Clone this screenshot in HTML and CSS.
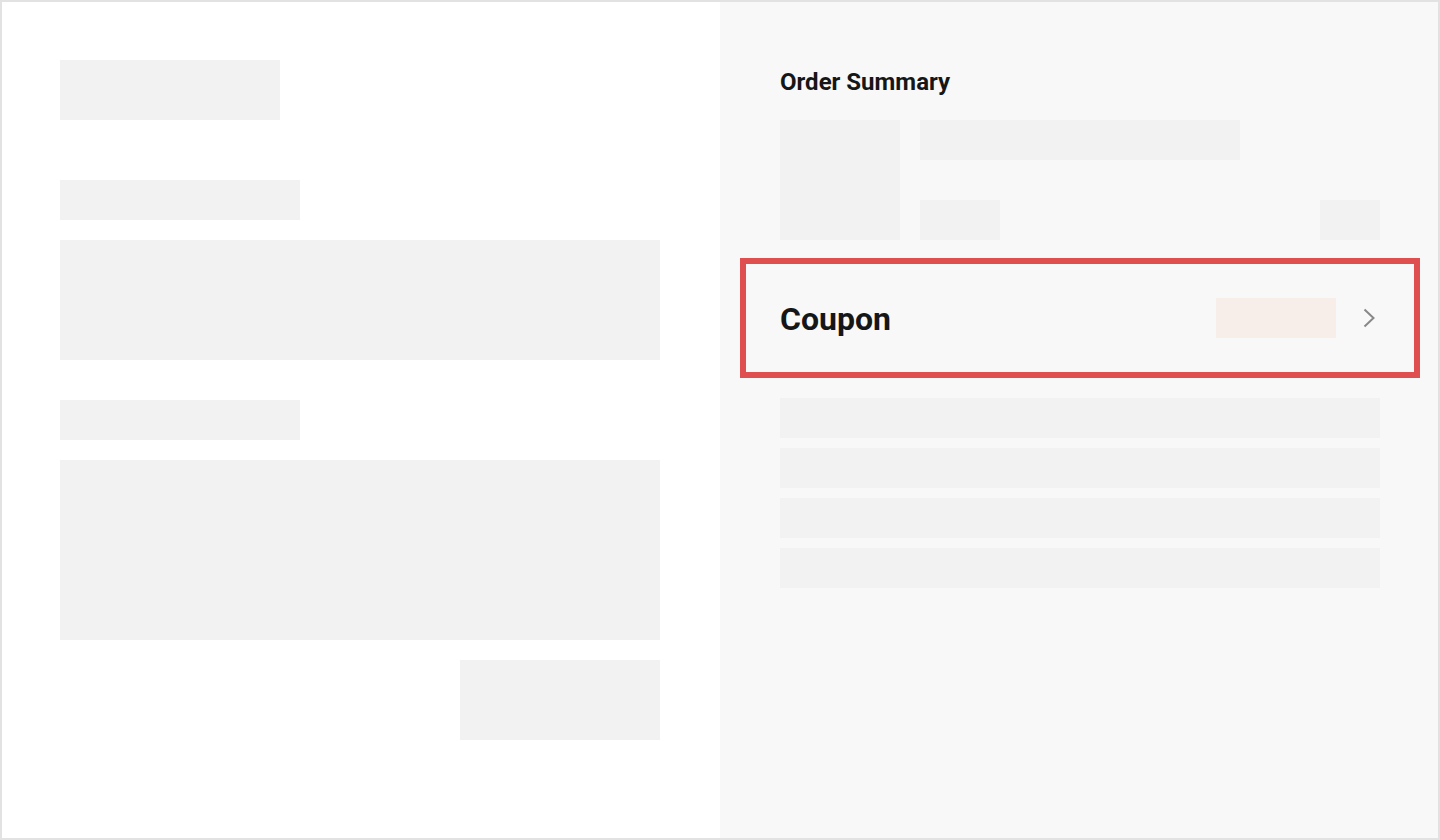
FILE: index.html
```html
<!DOCTYPE html>
<html lang="en">
<head>
<meta charset="utf-8">
<title>Checkout</title>
<link rel="stylesheet" href="styles.css">
</head>
<body>
<div class="page">
  <main class="left">
    <div class="ph ph-title"></div>
    <div class="ph ph-label first"></div>
    <div class="ph ph-field"></div>
    <div class="ph ph-label second"></div>
    <div class="ph ph-field tall"></div>
    <div class="actions"><div class="ph ph-button"></div></div>
  </main>
  <aside class="right">
    <h2 class="summary-title">Order Summary</h2>
    <div class="product">
      <div class="ph product-img"></div>
      <div class="product-info">
        <div class="ph product-name"></div>
        <div class="product-meta">
          <div class="ph product-qty"></div>
          <div class="ph product-price"></div>
        </div>
      </div>
    </div>
    <div class="coupon">
      <span class="coupon-label">Coupon</span>
      <div class="coupon-right">
        <div class="coupon-value"></div>
        <svg class="chevron" width="20" height="20" viewBox="0 0 20 20" aria-hidden="true">
          <path d="M4.5 1.5 L13.5 10 L4.5 18.5" fill="none" stroke="#888888" stroke-width="2"/>
        </svg>
      </div>
    </div>
    <div class="totals">
      <div class="ph total-row"></div>
      <div class="ph total-row"></div>
      <div class="ph total-row"></div>
      <div class="ph total-row"></div>
    </div>
  </aside>
</div>
</body>
</html>
```

FILE: styles.css
```css
* { box-sizing: border-box; }
html, body { margin: 0; padding: 0; }
body {
  font-family: Roboto, "Liberation Sans", Arial, sans-serif;
  color: #161616;
  background: #ffffff;
}
.page {
  width: 1440px;
  height: 840px;
  display: grid;
  grid-template-columns: 720px 720px;
  outline: 2px solid #e2e2e2;
  outline-offset: -2px;
  overflow: hidden;
}
.ph { background: #f2f2f2; }

.left {
  background: #ffffff;
  padding: 60px;
  display: flex;
  flex-direction: column;
}
.ph-title { width: 220px; height: 60px; }
.ph-label { width: 240px; height: 40px; }
.ph-label.first { margin-top: 60px; }
.ph-label.second { margin-top: 40px; }
.ph-field { width: 600px; height: 120px; margin-top: 20px; }
.ph-field.tall { height: 180px; }
.actions { width: 600px; display: flex; justify-content: flex-end; margin-top: 20px; }
.ph-button { width: 200px; height: 80px; }

.right {
  background: #f8f8f8;
  padding: 60px;
  display: flex;
  flex-direction: column;
}
.summary-title {
  margin: 0;
  height: 60px;
  padding-top: 8px;
  font-size: 24px;
  line-height: 28px;
  font-weight: 700;
  color: #161616;
}
.product { display: flex; gap: 20px; height: 120px; }
.product-img { width: 120px; height: 120px; }
.product-info {
  flex: 1;
  display: flex;
  flex-direction: column;
  justify-content: space-between;
}
.product-name { width: 320px; height: 40px; }
.product-meta { display: flex; justify-content: space-between; }
.product-qty { width: 80px; height: 40px; }
.product-price { width: 60px; height: 40px; }

.coupon {
  margin: 18px -40px 20px;
  height: 120px;
  border: 6px solid #e04f50;
  padding: 0 34px;
  display: flex;
  align-items: center;
  justify-content: space-between;
}
.coupon-label {
  font-size: 32px;
  font-weight: 700;
  line-height: 40px;
  padding-top: 2px;
  color: #161616;
}
.coupon-right { display: flex; align-items: center; gap: 24px; }
.coupon-value { width: 120px; height: 40px; background: #f7eee9; }
.chevron { display: block; }

.totals { display: flex; flex-direction: column; gap: 10px; }
.total-row { height: 40px; }
```
